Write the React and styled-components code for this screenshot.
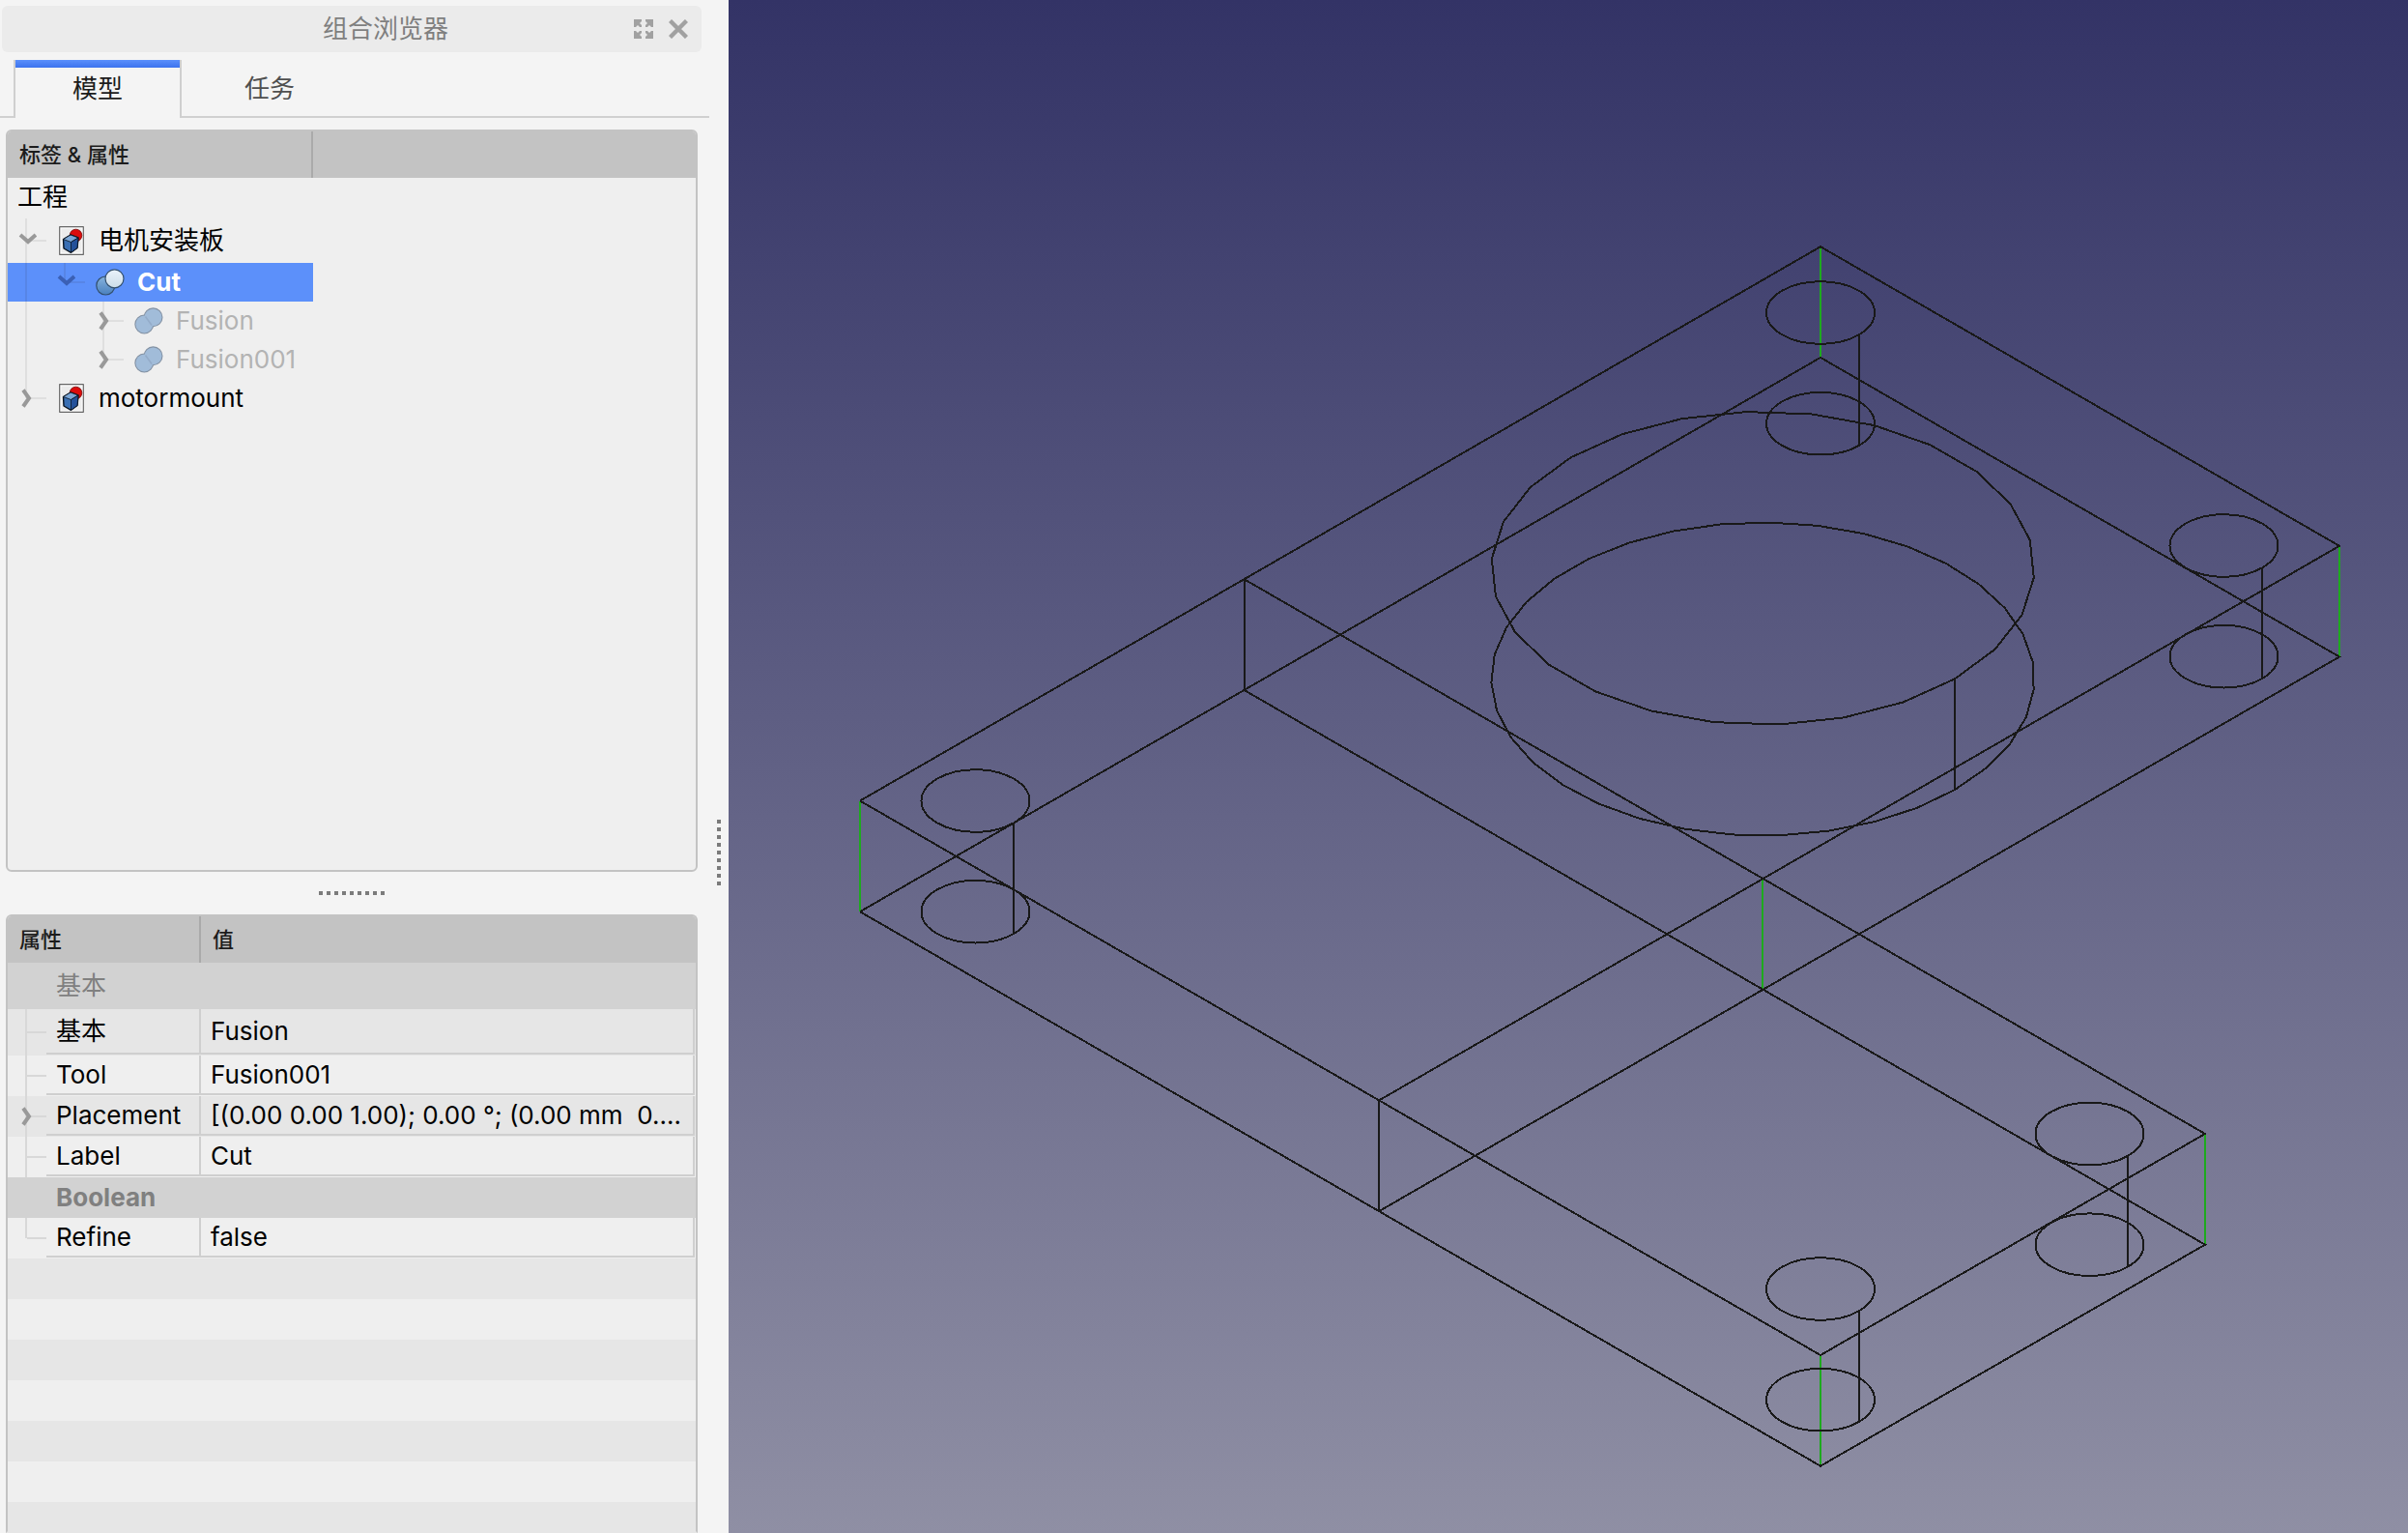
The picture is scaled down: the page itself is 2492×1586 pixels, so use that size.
import { useState } from "react";
import styled, { createGlobalStyle, css } from "styled-components";

const GlobalStyle = createGlobalStyle`
  * {
    box-sizing: border-box;
  }

  body {
    margin: 0;
    background: #f4f4f4;
    color: #000;
    font-family: Inter, "Noto Sans CJK SC", sans-serif;
    font-size: 26px;
    line-height: 32px;
  }

  button {
    padding: 0;
    border: 0;
    background: none;
    color: inherit;
    font: inherit;
  }
`

const Window = styled.div`
  display: grid;
  grid-template-columns: 734px 20px 1fr;
  height: 100vh;
  overflow: hidden;
`

const Dock = styled.aside`
  display: flex;
  flex-direction: column;
  min-height: 0;
`

const TitleBar = styled.header`
  display: flex;
  align-items: center;
  gap: 16px;
  flex: none;
  height: 48px;
  margin: 6px 8px 8px 2px;
  padding: 0 14px 0 156px;
  border-radius: 6px;
  background: #ebebeb;
  color: #7f7f7f;
`

const Title = styled.h1`
  flex: 1;
  margin: 0;
  font-size: 26px;
  font-weight: 400;
  text-align: center;
`

const TitleButton = styled.button`
  display: flex;
  color: #a1a1a1;
`

const TabBar = styled.div`
  display: flex;
  flex: none;
  gap: 4px;
  height: 60px;
  margin-bottom: 12px;
  padding-left: 14px;
  background: linear-gradient(#d0d0d0, #d0d0d0) bottom / 100% 2px no-repeat;
`

const Tab = styled.button`
  width: 174px;
  border: solid transparent;
  border-width: 0 2px;
  color: #4f4f4f;

  ${props => props.$active && css`
    border-color: #cfcfcf;
    background: linear-gradient(#5b90fb, #3c73ee) top / 100% 8px no-repeat #f4f4f4;
    color: #1c1c1c;
  `}
`

const Panel = styled.section`
  flex: ${props => props.$grow} 1 0;
  min-height: 0;
  margin: 0 12px 0 6px;
  overflow: hidden;
  border: 2px solid #c3c3c3;
  border-radius: 6px;
  background: #efefef;

  ${props => props.$openEnd && css`
    border-bottom-color: #e6e6e6;
    border-bottom-left-radius: 0;
    border-bottom-right-radius: 0;
  `}
`

const TreeHeader = styled.div`
  display: flex;
  height: 48px;
  background: #c3c3c3;
`

const TreeHeading = styled.div`
  width: 316px;
  padding: 8px 12px;
  border-right: 2px solid #aaa;
  color: #1c1c1c;
  font-size: 22px;
  font-weight: 500;
`

const Tree = styled.ul`
  width: 316px;
  margin: 0;
  padding: 0;
  list-style: none;
`

const RootLabel = styled.li`
  height: 42px;
  padding: 4px 10px;
`

const TreeRow = styled.li`
  --guide: ${props => props.$selected ? '#5785e6' : '#dfdfdf'};
  display: flex;
  align-items: center;
  height: ${props => props.$tall ? 46 : 40}px;
  background: ${props => props.$selected ? '#5c90fa' : 'transparent'};
  color: ${props => props.$selected ? '#fff' : props.$hidden ? '#b3b3b3' : '#000'};
  font-weight: ${props => props.$selected ? 700 : 400};
`

// one indent step; draws the branch line as a background
const guides = {
  none: 'none',
  pass: 'linear-gradient(var(--guide), var(--guide)) 18px 0 / 2px 100% no-repeat',
  tee: `linear-gradient(var(--guide), var(--guide)) 18px 0 / 2px 100% no-repeat,
    linear-gradient(var(--guide), var(--guide)) 100% 50% / 20px 2px no-repeat`,
  end: `linear-gradient(var(--guide), var(--guide)) 18px 0 / 2px 50% no-repeat,
    linear-gradient(var(--guide), var(--guide)) 100% 50% / 20px 2px no-repeat`
}

const Guide = styled.span`
  display: flex;
  flex: none;
  align-self: stretch;
  align-items: center;
  justify-content: center;
  width: 40px;
  background: ${props => guides[props.$kind]};
`

const Toggle = styled.button`
  display: flex;
  color: ${props => props.$selected ? '#3b60b5' : '#999'};
`

const TreeIcon = styled.span`
  display: flex;
  justify-content: center;
  width: 32px;
  margin: 0 12px 0 10px;
  opacity: ${props => props.$hidden ? 0.55 : 1};
`

const Splitter = styled.div`
  display: flex;
  flex: none;
  align-items: center;
  justify-content: center;
  gap: 4px;
  height: 44px;
  padding-right: 6px;
`

const SideSplitter = styled(Splitter)`
  flex-direction: column;
  height: auto;
  padding: 178px 0 0;
`

const Dot = styled.i`
  width: 4px;
  height: 4px;
  background: #7b7b7b;
`

const PropertyTable = styled.table`
  width: 100%;
  border-spacing: 0;
  table-layout: fixed;
`

const Heading = styled.th`
  height: 48px;
  padding: 0 12px;
  border-right: ${props => props.$first ? '2px solid #aaa' : 0};
  background: #c3c3c3;
  color: #1c1c1c;
  font-size: 22px;
  font-weight: 500;
  text-align: left;
  width: ${props => props.$first ? '200px' : 'auto'};
`

const Category = styled.th`
  height: ${props => props.$tall ? 48 : 42}px;
  padding: 0 0 0 50px;
  background: #d2d2d2;
  color: #808080;
  font-weight: ${props => props.$tall ? 400 : 700};
  text-align: left;
`

const PropertyRow = styled.tr`
  --guide: #d8d8d8;
  height: ${props => props.$tall ? 48 : 42}px;
  background: ${props => props.$dark ? '#e6e6e6' : '#efefef'};
`

const PropertyCell = styled.td`
  height: inherit;
  padding: ${props => props.$value ? '0 1px 1px 0' : '0'};
`

const NameBox = styled.div`
  display: flex;
  height: ${props => props.$tall ? 48 : 42}px;
`

const Cell = styled.div`
  flex: 1;
  height: ${props => props.$tall ? 47 : 41}px;
  padding: ${props => props.$tall ? 7 : 4}px 0 0 10px;
  overflow: hidden;
  border: solid #cfcfcf;
  border-width: 0 2px 2px 0;
  white-space: pre;
`

const Viewport = styled.main`
  display: flex;
  min-width: 0;
  min-height: 0;
  background: linear-gradient(#333366, #8f8fa4);
`

const Drawing = styled.svg`
  flex: 1;
  min-width: 0;
  fill: none;
  stroke: #191919;
  stroke-width: 2;
  shape-rendering: crispEdges;
`

const CloseIcon = () => (
  <svg width="20" height="20" viewBox="0 0 20 20" stroke="currentColor" strokeWidth="4.4">
    <path d="M1.5 1.5l17 17M18.5 1.5l-17 17" />
  </svg>
)

const FloatIcon = () => (
  <svg width="20" height="20" viewBox="0 0 20 20" fill="currentColor">
    <path d="M0 0h8v2L6 4l2 2v2H6L4 6 2 8H0z" />
    <path d="M20 0h-8v2l2 2-2 2v2h2l2-2 2 2h2z" />
    <path d="M0 20h8v-2l-2-2 2-2v-2H6l-2 2-2-2H0z" />
    <path d="M20 20h-8v-2l2-2-2-2v-2h2l2 2 2-2h2z" />
  </svg>
)

const Chevron = ({ open }) => (
  <svg width="20" height="20" viewBox="0 0 20 20" fill="none" stroke="currentColor" strokeWidth="4">
    <path d={open ? "M3 4l8 7 8-7" : "M6 1.500l6 8.500-6 8.500"} />
  </svg>
)

const DocumentIcon = () => (
  <svg width="26" height="30" viewBox="0 0 26 30" strokeLinejoin="round">
    <rect x=".7" y=".7" width="24.600" height="28.600" fill="#fff" stroke="#666" strokeWidth="1.200" />
    <rect x="2.500" y="2.500" width="21" height="25" fill="#ececec" />
    <circle cx="17.500" cy="9.500" r="6.300" fill="#dc0c0c" stroke="#700" strokeWidth=".8" />
    <path d="M4.500 13.500l7.500-4.500 8 3-1 10.500-6.500 4.800-7.500-4.300z" fill="#3a6fb3" stroke="#0b1521" strokeWidth="1.400" />
    <path d="M4.500 13.500l7.500-4.500 8 3-7.500 4.500z" fill="#7ba6d6" stroke="#0b1521" strokeWidth=".8" />
    <path d="M12.500 16.500l7.500-4.500-1 10.500-6.500 4.800z" fill="#24519a" stroke="#0b1521" strokeWidth=".8" />
  </svg>
)

const CutIcon = () => (
  <svg width="30" height="28" viewBox="0 0 30 28" stroke="#33506e" strokeWidth="1.200">
    <defs>
      <linearGradient id="cut-base" x2="0" y2="1">
        <stop stopColor="#86b3dd" />
        <stop offset="1" stopColor="#4a80bd" />
      </linearGradient>
      <linearGradient id="cut-tool" x2="0" y2="1">
        <stop stopColor="#e9f2fb" />
        <stop offset="1" stopColor="#ccdde8" />
      </linearGradient>
    </defs>
    <circle cx="10.300" cy="17.500" r="9.500" fill="url(#cut-base)" />
    <circle cx="19.500" cy="10.300" r="9.500" fill="url(#cut-tool)" />
  </svg>
)

const FusionIcon = () => (
  <svg width="30" height="28" viewBox="0 0 30 28">
    <g stroke="#2b4666" strokeWidth="2">
      <circle cx="10.300" cy="17.500" r="9" />
      <circle cx="19.500" cy="10.300" r="9" />
    </g>
    <g fill="#6393c8">
      <circle cx="10.300" cy="17.500" r="8.900" />
      <circle cx="19.500" cy="10.300" r="8.900" />
    </g>
    <path d="M11.500 9.500l6.500 9" stroke="#4a76ab" strokeWidth="1.600" />
  </svg>
)

const icons = {
  document: DocumentIcon,
  cut: CutIcon,
  fusion: FusionIcon
}

const treeItems = [
  { label: '电机安装板', icon: 'document', guides: ['tee'], open: true, tall: true },
  { label: 'Cut', icon: 'cut', guides: ['pass', 'end'], open: true },
  { label: 'Fusion', icon: 'fusion', guides: ['pass', 'none', 'tee'], hidden: true },
  { label: 'Fusion001', icon: 'fusion', guides: ['pass', 'none', 'end'], hidden: true },
  { label: 'motormount', icon: 'document', guides: ['end'] }
]

const properties = [
  { category: '基本', tall: true },
  { name: '基本', value: 'Fusion', tall: true, dark: true },
  { name: 'Tool', value: 'Fusion001' },
  { name: 'Placement', value: '[(0.00 0.00 1.00); 0.00 °; (0.00 mm  0.…', dark: true, expandable: true },
  { name: 'Label', value: 'Cut' },
  { category: 'Boolean' },
  { name: 'Refine', value: 'false', last: true }
]

const emptyRows = [true, false, true, false, true, false, true]

const TreeItem = ({ item, selected, onSelect }) => {
  const Icon = icons[item.icon]

  return (
    <TreeRow $selected={selected} $hidden={item.hidden} $tall={item.tall} onClick={onSelect}>
      {item.guides.map((kind, i) => (
        <Guide key={i} $kind={kind}>
          {i === item.guides.length - 1 &&
            <Toggle $selected={selected} aria-label={item.label} aria-expanded={!!item.open}>
              <Chevron open={item.open} />
            </Toggle>
          }
        </Guide>
      ))}
      <TreeIcon $hidden={item.hidden}><Icon /></TreeIcon>
      <span>{item.label}</span>
    </TreeRow>
  )
}

const Property = ({ data }) => {
  if (data.category) {
    return (
      <tr>
        <Category colSpan={2} $tall={data.tall}>{data.category}</Category>
      </tr>
    )
  }

  return (
    <PropertyRow $dark={data.dark} $tall={data.tall}>
      <PropertyCell>
        <NameBox $tall={data.tall}>
          <Guide $kind={data.last ? 'end' : 'tee'}>
            {data.expandable &&
              <Toggle aria-label={data.name} aria-expanded={false}><Chevron /></Toggle>
            }
          </Guide>
          <Cell $tall={data.tall}>{data.name}</Cell>
        </NameBox>
      </PropertyCell>
      <PropertyCell $value>
        <Cell $tall={data.tall}>{data.value}</Cell>
      </PropertyCell>
    </PropertyRow>
  )
}

const Dots = () => Array.from({ length: 9 }, (_, i) => <Dot key={i} />)

const thickness = 114.7
const faceEdges = 'M136 828.500L1130 255.200L1667 564.800L673 1138.500M136 828.500L1130 1402L1528 1173L534 599.500'
const blackEdges = [[534, 599.5], [673, 1138.5]]
const greenEdges = [[136, 828.5], [1130, 255.2], [1667, 564.8], [1070, 909], [1528, 1173], [1130, 1402]]
const holes = [[255.5, 828.5], [1130, 323.5], [1547.5, 564.5], [1408.5, 1173], [1130, 1333.5]]

// circle seen in isometric view, starting at the seam edge
const ring = (cx, cy, rx, ry, count) =>
  Array.from({ length: count }, (_, i) => {
    const angle = Math.PI / 4 - i * 2 * Math.PI / count
    return `${cx + rx * Math.cos(angle)},${cy + ry * Math.sin(angle)}`
  }).join(' ')

const Model = () => (
  <Drawing viewBox="0 0 1738 1586" role="img" aria-label="Cut">
    <g stroke="#1eaa1e">
      {greenEdges.map(([x, y]) => <path key={`${x}-${y}`} d={`M${x} ${y}v${thickness}`} />)}
    </g>
    <path d={faceEdges} />
    <path d={faceEdges} transform={`translate(0 ${thickness})`} />
    {blackEdges.map(([x, y]) => <path key={x} d={`M${x} ${y}v${thickness}`} />)}
    {holes.map(([x, y]) => (
      <g key={`${x}-${y}`}>
        <path d={`M${Math.round(x + 39.5)} ${y + 23}v${thickness}`} />
        <ellipse cx={x} cy={y} rx="56" ry="32.300" />
        <ellipse cx={x} cy={y + thickness} rx="56" ry="32.300" />
      </g>
    ))}
    <polygon points={ring(1070.3, 587.8, 281, 162, 26)} />
    <polygon points={ring(1070.3, 587.8 + thickness, 281, 162, 35)} />
    <path d={`M1269 702v${thickness}`} />
  </Drawing>
)

const App = () => {
  const [tab, setTab] = useState('模型')
  const [selected, setSelected] = useState('Cut')

  return (
    <>
      <GlobalStyle />
      <Window>
        <Dock>
          <TitleBar>
            <Title>组合浏览器</Title>
            <TitleButton aria-label="浮动"><FloatIcon /></TitleButton>
            <TitleButton aria-label="关闭"><CloseIcon /></TitleButton>
          </TitleBar>
          <TabBar role="tablist">
            {['模型', '任务'].map(name => (
              <Tab key={name} role="tab" aria-selected={tab === name} $active={tab === name} onClick={() => setTab(name)}>
                {name}
              </Tab>
            ))}
          </TabBar>
          <Panel $grow={6}>
            <TreeHeader>
              <TreeHeading>标签 &amp; 属性</TreeHeading>
            </TreeHeader>
            <Tree>
              <RootLabel>工程</RootLabel>
              {treeItems.map(item => (
                <TreeItem
                  key={item.label}
                  item={item}
                  selected={selected === item.label}
                  onSelect={() => setSelected(item.label)}
                />
              ))}
            </Tree>
          </Panel>
          <Splitter><Dots /></Splitter>
          <Panel $grow={5} $openEnd>
            <PropertyTable>
              <thead>
                <tr>
                  <Heading $first>属性</Heading>
                  <Heading>值</Heading>
                </tr>
              </thead>
              <tbody>
                {properties.map((data, i) => <Property key={i} data={data} />)}
                {emptyRows.map((dark, i) => (
                  <PropertyRow key={i} $dark={dark}><PropertyCell colSpan={2} /></PropertyRow>
                ))}
              </tbody>
            </PropertyTable>
          </Panel>
        </Dock>
        <SideSplitter><Dots /></SideSplitter>
        <Viewport>
          <Model />
        </Viewport>
      </Window>
    </>
  )
}

export default App
